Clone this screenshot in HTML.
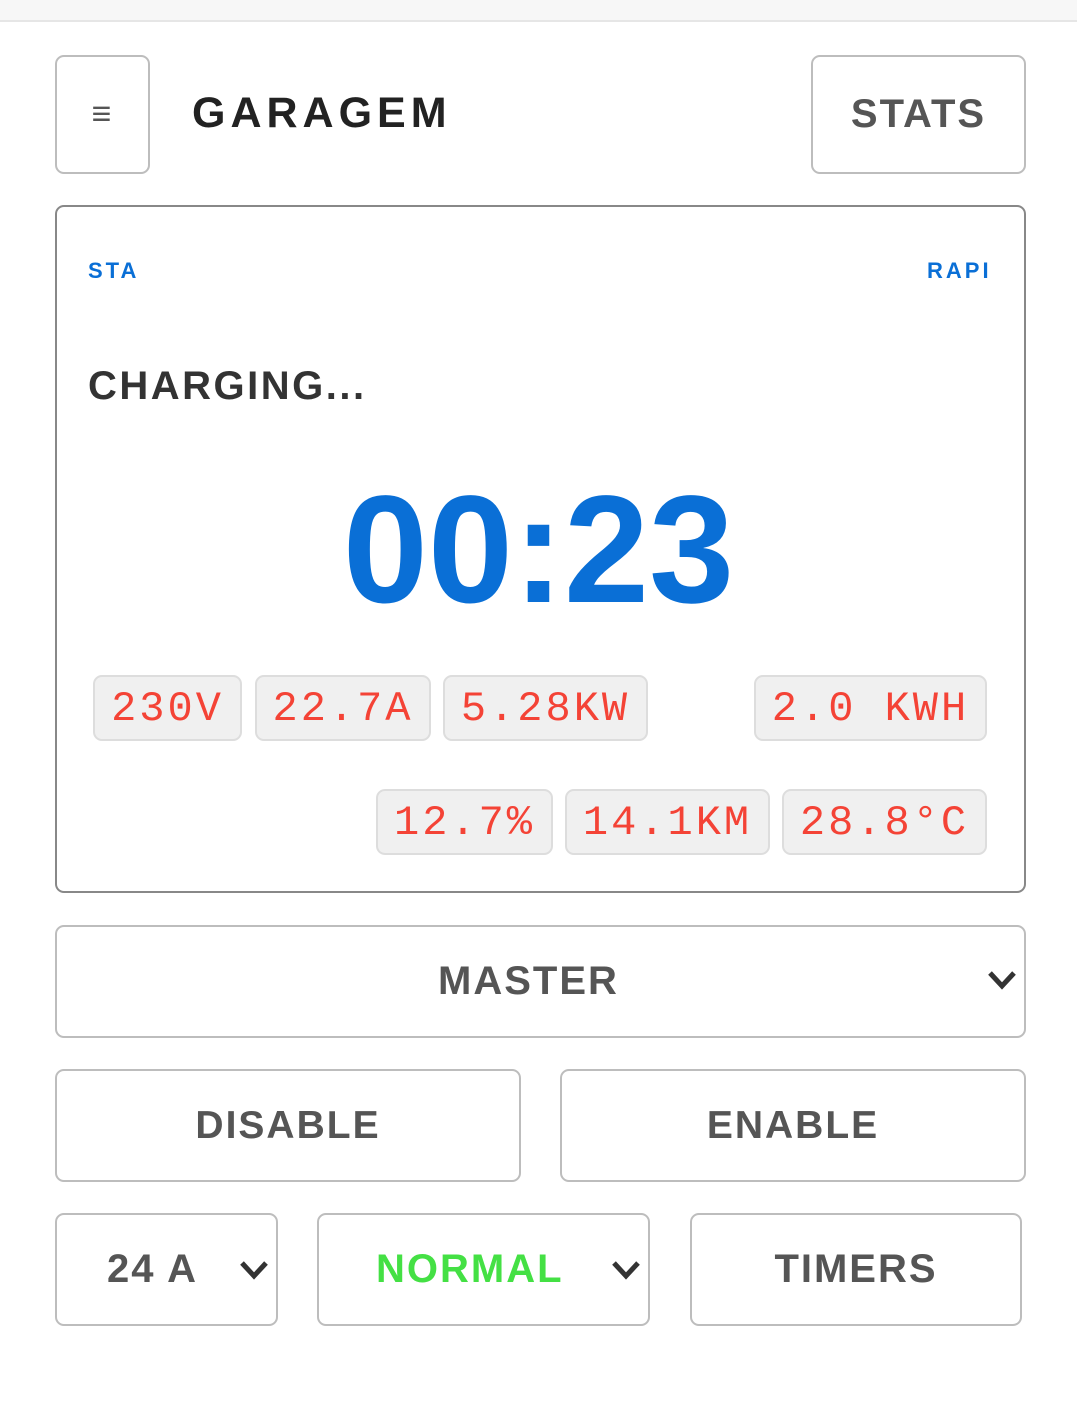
<!DOCTYPE html>
<html><head><style>
*{box-sizing:border-box;margin:0;padding:0}
body{width:1077px;height:1417px;background:#fff;position:relative;overflow:hidden;font-family:"Liberation Sans",sans-serif;font-weight:bold}
.a{position:absolute}
.box{position:absolute;border:2px solid #bdbdbd;border-radius:9px;background:#fff;display:flex;align-items:center;justify-content:center;color:#555;font-size:38px;letter-spacing:2px}
.pill{position:absolute;height:66px;background:#f0f0f0;border:2px solid #ddd;border-radius:9px;color:#f44336;font-family:"Liberation Mono",monospace;font-weight:normal;font-size:42px;letter-spacing:3px;display:flex;align-items:center;justify-content:center;padding-top:2px}
.chev{position:absolute;width:30px;height:20px}
</style></head><body>
<div class="a" style="left:0;top:0;width:1077px;height:22px;background:#f7f7f7;border-bottom:2px solid #e6e6e6"></div>
<div class="box" style="left:55px;top:55px;width:95px;height:119px;font-size:34px;color:#555;font-weight:normal">≡</div>
<div class="a" style="left:192px;top:89px;font-size:43px;letter-spacing:5px;color:#222">GARAGEM</div>
<div class="box" style="left:811px;top:55px;width:215px;height:119px;font-size:40px">STATS</div>
<div class="a" style="left:55px;top:205px;width:971px;height:688px;border:2px solid #888;border-radius:9px"></div>
<div class="a" style="left:88px;top:258px;font-size:22px;letter-spacing:3px;color:#0a6fd6">STA</div>
<div class="a" style="left:927px;top:258px;font-size:22px;letter-spacing:3px;color:#0a6fd6">RAPI</div>
<div class="a" style="left:88px;top:364px;font-size:40px;letter-spacing:2.5px;color:#333">CHARGING...</div>
<div class="a" style="left:0;width:1077px;top:470px;text-align:center;font-size:153px;color:#0a6fd6;line-height:160px">00:23</div>
<div class="pill" style="left:93px;top:675px;width:149px">230V</div>
<div class="pill" style="left:255px;top:675px;width:176px">22.7A</div>
<div class="pill" style="left:443px;top:675px;width:205px">5.28KW</div>
<div class="pill" style="left:754px;top:675px;width:233px">2.0 KWH</div>
<div class="pill" style="left:376px;top:789px;width:177px">12.7%</div>
<div class="pill" style="left:565px;top:789px;width:205px">14.1KM</div>
<div class="pill" style="left:782px;top:789px;width:205px">28.8°C</div>
<div class="box" style="left:55px;top:925px;width:971px;height:113px;font-size:40px;padding-right:24px">MASTER</div>
<svg class="chev" style="left:987px;top:970px" viewBox="0 0 30 20"><path d="M3 3 L15 16 L27 3" fill="none" stroke="#333" stroke-width="5"/></svg>
<div class="box" style="left:55px;top:1069px;width:466px;height:113px;font-size:39px">DISABLE</div>
<div class="box" style="left:560px;top:1069px;width:466px;height:113px;font-size:39px">ENABLE</div>
<div class="box" style="left:55px;top:1213px;width:223px;height:113px;font-size:40px;justify-content:flex-start;padding-left:50px">24 A</div>
<svg class="chev" style="left:239px;top:1260px" viewBox="0 0 30 20"><path d="M3 3 L15 16 L27 3" fill="none" stroke="#333" stroke-width="5"/></svg>
<div class="box" style="left:317px;top:1213px;width:333px;height:113px;font-size:40px;color:#44e044;justify-content:flex-start;padding-left:57px">NORMAL</div>
<svg class="chev" style="left:611px;top:1260px" viewBox="0 0 30 20"><path d="M3 3 L15 16 L27 3" fill="none" stroke="#333" stroke-width="5"/></svg>
<div class="box" style="left:690px;top:1213px;width:332px;height:113px;font-size:40px">TIMERS</div>
</body></html>
